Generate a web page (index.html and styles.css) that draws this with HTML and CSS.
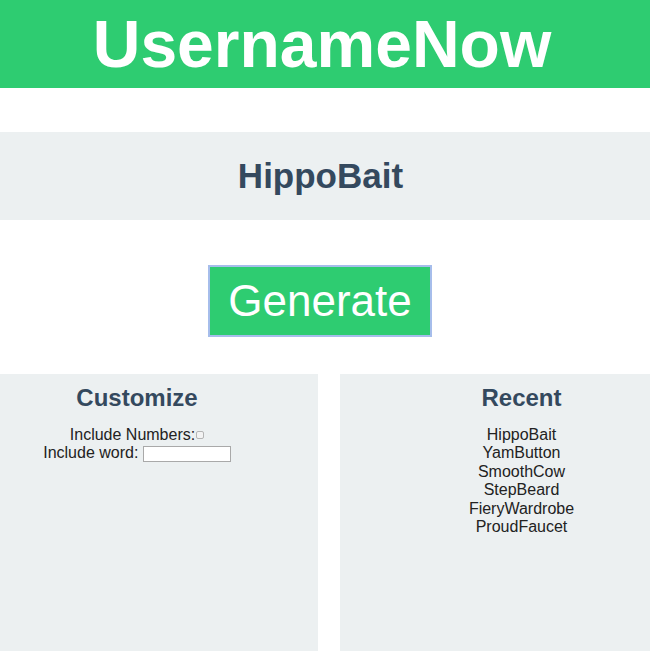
FILE: index.html
```html
<!DOCTYPE html>
<html>
<head>
<meta charset="utf-8">
<title>UsernameNow</title>
<link rel="stylesheet" href="styles.css">
</head>
<body>
<header class="header">
  <h1 class="title">UsernameNow</h1>
</header>
<section class="result">
  <h2 class="result-name">HippoBait</h2>
</section>
<div class="actions">
  <button class="generate" type="button">Generate</button>
</div>
<div class="panels">
  <section class="panel panel-left">
    <h3 class="panel-title">Customize</h3>
    <div class="option">Include Numbers:<input class="check" type="checkbox"></div>
    <div class="option">Include word: <input class="word" type="text"></div>
  </section>
  <section class="panel panel-right">
    <h3 class="panel-title">Recent</h3>
    <ul class="recent">
      <li>HippoBait</li>
      <li>YamButton</li>
      <li>SmoothCow</li>
      <li>StepBeard</li>
      <li>FieryWardrobe</li>
      <li>ProudFaucet</li>
    </ul>
  </section>
</div>
</body>
</html>
```

FILE: styles.css
```css
html, body {
  margin: 0;
  padding: 0;
  height: 100%;
}
body {
  font-family: "Liberation Sans", Arial, sans-serif;
  font-size: 16px;
  color: #222;
  background: #fff;
  display: flex;
  flex-direction: column;
  overflow: hidden;
}
.header {
  background: #2ecc71;
  height: 88px;
  display: flex;
  align-items: center;
  justify-content: center;
  flex: none;
}
.title {
  margin: 0;
  color: #fff;
  font-size: 66px;
  font-weight: bold;
  line-height: 1;
  padding-right: 6px;
}
.result {
  margin-top: 44px;
  height: 88px;
  background: #ecf0f1;
  display: flex;
  align-items: center;
  justify-content: center;
  flex: none;
}
.result-name {
  margin: 0;
  font-size: 35px;
  font-weight: bold;
  color: #34495e;
  padding-right: 9px;
}
.actions {
  margin-top: 45px;
  display: flex;
  justify-content: center;
  padding-right: 10px;
  flex: none;
}
.generate {
  width: 224px;
  height: 72px;
  background: #2ecc71;
  border: 2px solid #a6bdeb;
  color: #fff;
  font-family: "Liberation Sans", Arial, sans-serif;
  font-size: 44px;
  padding: 0;
  margin: 0;
}
.panels {
  margin-top: 37px;
  flex: 1;
  display: grid;
  grid-template-columns: 318px 1fr;
  column-gap: 22px;
}
.panel {
  background: #ecf0f1;
  text-align: center;
  padding-top: 10px;
}
.panel-left {
  padding-right: 44px;
}
.panel-right {
  padding-left: 53px;
}
.panel-title {
  margin: 0 0 14px;
  font-size: 24px;
  font-weight: bold;
  color: #34495e;
}
.option {
  line-height: 18px;
}
.check {
  appearance: none;
  -webkit-appearance: none;
  width: 8px;
  height: 8px;
  margin: 0 0 0 1px;
  border: 1px solid #b5b5b5;
  border-radius: 2px;
  background: #f3f3f3;
  vertical-align: 1px;
}
.word {
  width: 88px;
  height: 16px;
  box-sizing: border-box;
  border: 1px solid #a9a9a9;
  background: #fff;
  margin: 0;
  padding: 0 2px;
  vertical-align: 0;
  font-size: 13px;
}
.recent {
  list-style: none;
  margin: 0;
  padding: 0;
  line-height: 18.4px;
}
```
